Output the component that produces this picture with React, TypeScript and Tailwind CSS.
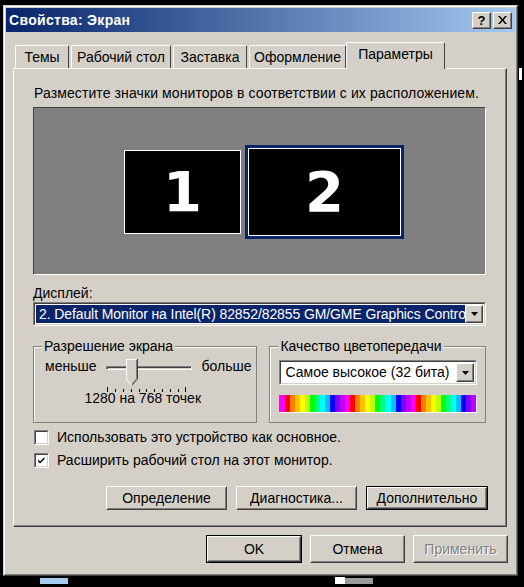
import React from 'react'

const font = "font-['Liberation_Sans',Arial,sans-serif]"

const stripes = [
  'bg-[#ff00ff]', 'bg-[#ff0000]', 'bg-[#ff8000]', 'bg-[#ffc000]', 'bg-[#ffff00]', 'bg-[#c0ff00]',
  'bg-[#00ff00]', 'bg-[#00ff80]', 'bg-[#00ffff]', 'bg-[#00c0ff]', 'bg-[#0000ff]', 'bg-[#8000ff]',
  'bg-[#c000ff]',
]

const Raised = ({ children, className = '' }: { children: React.ReactNode; className?: string }) => (
  <div className={`border border-t-white border-l-white border-b-[#404040] border-r-[#404040] ${className}`}>
    <div className="w-full h-full border border-t-[#d4d0c8] border-l-[#d4d0c8] border-b-[#808080] border-r-[#808080] flex items-center justify-center">
      {children}
    </div>
  </div>
)

const Sunken = ({ children, className = '' }: { children: React.ReactNode; className?: string }) => (
  <div className={`border border-t-[#808080] border-l-[#808080] border-b-white border-r-white ${className}`}>
    <div className="w-full h-full border border-t-[#404040] border-l-[#404040] border-b-[#d4d0c8] border-r-[#d4d0c8]">
      {children}
    </div>
  </div>
)

const ArrowBtn = () => (
  <Raised className="w-[18px] h-full bg-[#d4d0c8]">
    <svg width="7" height="4" viewBox="0 0 7 4"><path d="M0 0h7L3.5 4z" fill="#000" /></svg>
  </Raised>
)

const Group = ({ title, className = '', children }: { title: string; className?: string; children: React.ReactNode }) => (
  <div className={`relative border border-[#808080] ${className}`}>
    <div className="w-full h-full border-t border-l border-white border-r-0 border-b-0">
      <div className="absolute -top-[9px] left-[8px] bg-[#d4d0c8] px-[2px] text-[14px] leading-[16px]">{title}</div>
      {children}
    </div>
  </div>
)

const Tab = ({ label, w, active = false }: { label: string; w: string; active?: boolean }) =>
  active ? (
    <div className={`relative -ml-[2px] h-[27px] ${w} text-center pt-[3px] bg-[#d4d0c8] border-t border-l border-white border-r border-r-[#404040] rounded-tl-[2px] rounded-tr-[2px] z-10 text-[14px] leading-[17px] -mb-[1px]`}>
      {label}
    </div>
  ) : (
    <div className={`h-[23px] ${w} text-center pt-[3px] border-t border-l border-white border-r border-r-[#404040] rounded-tl-[2px] rounded-tr-[2px] text-[14px] leading-[17px] mr-[2px]`}>
      {label}
    </div>
  )

export default function App() {
  return (
    <div className={`w-[524px] h-[587px] bg-black overflow-hidden relative ${font} text-black`}>
      <div className="pt-[5px] pl-[3px]">
        <div className="w-[515px] h-[571px] border border-t-[#d4d0c8] border-l-[#d4d0c8] border-b-[#404040] border-r-[#404040]">
          <div className="w-full h-full border border-t-white border-l-white border-b-[#808080] border-r-[#808080] bg-[#d4d0c8] p-[1px] flex flex-col">
            {/* title bar */}
            <div className="h-[24px] bg-linear-to-r from-[#0a246a] to-[#a6caf0] flex items-center pl-[3px] pr-[3px]">
              <span className="text-white font-bold text-[14px] tracking-[0.3px]">Свойства: Экран</span>
              <div className="ml-auto flex gap-[2px]">
                <Raised className="w-[19px] h-[17px] bg-[#d4d0c8]">
                  <span className="font-bold text-[13px] leading-none">?</span>
                </Raised>
                <Raised className="w-[19px] h-[17px] bg-[#d4d0c8]">
                  <svg width="9" height="8" viewBox="0 0 9 8"><path d="M0 0h2l2.5 3L7 0h2L5.5 4 9 8H7L4.5 5 2 8H0l3.5-4z" fill="#000" /></svg>
                </Raised>
              </div>
            </div>

            <div className="pl-[7px] pr-[8px] pt-[10px]">
              {/* tabs */}
              <div className="flex items-end h-[26px] pl-[2px]">
                <Tab label="Темы" w="w-[54px]" />
                <Tab label="Рабочий стол" w="w-[100px]" />
                <Tab label="Заставка" w="w-[74px]" />
                <Tab label="Оформление" w="w-[97px]" />
                <Tab label="Параметры" w="w-[99px]" active />
              </div>

              {/* panel */}
              <div className="h-[459px] border-t border-l border-white border-r border-b border-r-[#404040] border-b-[#404040]">
                <div className="h-full border-r border-b border-[#808080] px-[19px] pt-[16px] flex flex-col">
                  <div className="text-[14px] leading-[17px] pl-[1px] tracking-[0.1px]">
                    Разместите значки мониторов в соответствии с их расположением.
                  </div>

                  {/* monitor arrangement */}
                  <div className="mt-[5px] h-[168px] relative border border-t-[#404040] border-l-[#404040] border-b-white border-r-white bg-[#808080]">
                    <div className="absolute left-[90px] top-[42px] w-[117px] h-[84px] bg-black border border-white flex items-center justify-center">
                      <span className="text-white font-bold text-[56px] leading-none font-['DejaVu_Sans',sans-serif]">1</span>
                    </div>
                    <div className="absolute left-[211px] top-[37px] w-[159px] h-[94px] border-[3px] border-[#0a246a]">
                      <div className="w-full h-full bg-black border border-white flex items-center justify-center">
                        <span className="text-white font-bold text-[56px] leading-none font-['DejaVu_Sans',sans-serif]">2</span>
                      </div>
                    </div>
                  </div>

                  <div className="mt-[10px] text-[14px] leading-[16px]">Дисплей:</div>
                  <Sunken className="mt-[1px] h-[24px] bg-white">
                    <div className="flex h-full p-[1px]">
                      <div className="flex-1 bg-[#0a246a] text-white text-[14px] leading-[18px] pl-[3px] overflow-hidden whitespace-nowrap tracking-[-0.1px]">
                        2. Default Monitor на Intel(R) 82852/82855 GM/GME Graphics Controller
                      </div>
                      <ArrowBtn />
                    </div>
                  </Sunken>

                  {/* groups */}
                  <div className="mt-[20px] flex gap-[12px]">
                    <Group title="Разрешение экрана" className="w-[226px] h-[77px]">
                      <div className="flex items-start pt-[10px] pl-[10px] text-[14px]">
                        <span className="leading-[16px]">меньше</span>
                        <div className="relative ml-[10px] w-[86px] h-[34px]">
                          <div className="absolute top-[8px] left-0 w-[86px] h-[4px] border border-t-[#808080] border-l-[#808080] border-b-white border-r-white bg-[#d4d0c8]">
                            <div className="h-full border-t border-l border-[#404040]" />
                          </div>
                          <svg className="absolute left-[20px] top-[1px]" width="12" height="27" viewBox="0 0 12 27">
                            <path d="M0.5 0.5h10.5v19l-5.25 6.5-5.25-6.5z" fill="#d4d0c8" stroke="none" />
                            <path d="M0.5 20V0.5H11" fill="none" stroke="#fff" />
                            <path d="M11.5 0v20L5.75 26.5" fill="none" stroke="#404040" />
                            <path d="M10.5 1v18.6L5.75 25.2" fill="none" stroke="#808080" />
                            <path d="M0.5 20l5.25 6.5" fill="none" stroke="#fff" />
                          </svg>
                          <div className="absolute top-[29px] left-[1px] w-[79px] flex justify-between">
                            {Array.from({ length: 11 }).map((_, i) => (
                              <div key={i} className={`w-[1px] bg-black ${i === 0 || i === 10 ? 'h-[5px]' : 'h-[3px] mt-[2px]'}`} />
                            ))}
                          </div>
                        </div>
                        <span className="ml-[9px] leading-[16px]">больше</span>
                      </div>
                      <div className="text-center text-[14px] leading-[16px] -mt-[2px] pr-[6px]">1280 на 768 точек</div>
                    </Group>

                    <Group title="Качество цветопередачи" className="w-[218px] h-[77px]">
                      <div className="pt-[12px] px-[8px]">
                        <Sunken className="h-[25px] bg-white">
                          <div className="flex h-full p-[1px]">
                            <div className="flex-1 text-[14px] leading-[19px] pl-[3px] whitespace-nowrap overflow-hidden">
                              Самое высокое (32 бита)
                            </div>
                            <ArrowBtn />
                          </div>
                        </Sunken>
                        <div className="mt-[10px] h-[18px] flex overflow-hidden border-b border-r border-white">
                          {[0, 1, 2].flatMap((c) =>
                            stripes.map((s, i) => <div key={`${c}-${i}`} className={`flex-1 ${s}`} />)
                          )}
                        </div>
                      </div>
                    </Group>
                  </div>

                  {/* checkboxes */}
                  <div className="mt-[7px] flex flex-col gap-[8px] pl-[1px]">
                    <label className="flex items-center gap-[8px] text-[14px] leading-[15px]">
                      <Sunken className="w-[15px] h-[15px] bg-white"><div /></Sunken>
                      Использовать это устройство как основное.
                    </label>
                    <label className="flex items-center gap-[8px] text-[14px] leading-[15px]">
                      <Sunken className="w-[15px] h-[15px] bg-white">
                        <svg width="11" height="11" viewBox="0 0 11 11" className="block">
                          <path d="M2 4.5l2 2 4.5-4.5v2l-4.5 4.5-2-2z" fill="#000" />
                        </svg>
                      </Sunken>
                      Расширить рабочий стол на этот монитор.
                    </label>
                  </div>

                  {/* action buttons */}
                  <div className="mt-[18px] flex justify-end gap-[9px] -mr-[2px]">
                    <Raised className="w-[121px] h-[24px] bg-[#d4d0c8]"><span className="text-[14px]">Определение</span></Raised>
                    <Raised className="w-[121px] h-[24px] bg-[#d4d0c8]"><span className="text-[14px]">Диагностика...</span></Raised>
                    <div className="border border-black">
                      <Raised className="w-[120px] h-[22px] bg-[#d4d0c8]"><span className="text-[14px]">Дополнительно</span></Raised>
                    </div>
                  </div>
                </div>
              </div>

              {/* dialog buttons */}
              <div className="mt-[8px] flex justify-end gap-[8px] -mr-[1px]">
                <div className="border border-black">
                  <Raised className="w-[94px] h-[26px] bg-[#d4d0c8]"><span className="text-[14px]">OK</span></Raised>
                </div>
                <Raised className="w-[95px] h-[28px] bg-[#d4d0c8]"><span className="text-[14px]">Отмена</span></Raised>
                <Raised className="w-[95px] h-[28px] bg-[#d4d0c8]"><span className="text-[14px] text-[#808080] [text-shadow:1px_1px_0_#fff]">Применить</span></Raised>
              </div>
            </div>
          </div>
        </div>
      </div>
      {/* taskbar remnants */}
      <div className="absolute left-[40px] top-[578px] w-[28px] h-[6px] bg-[#a6caf0]" />
      <div className="absolute left-[335px] top-[577px] w-[10px] h-[7px] bg-white" />
      <div className="absolute left-[345px] top-[578px] w-[28px] h-[6px] bg-[#9a9a9a]" />
      <div className="absolute left-[519px] top-[68px] w-[3px] h-[12px] bg-white" />
    </div>
  )
}
